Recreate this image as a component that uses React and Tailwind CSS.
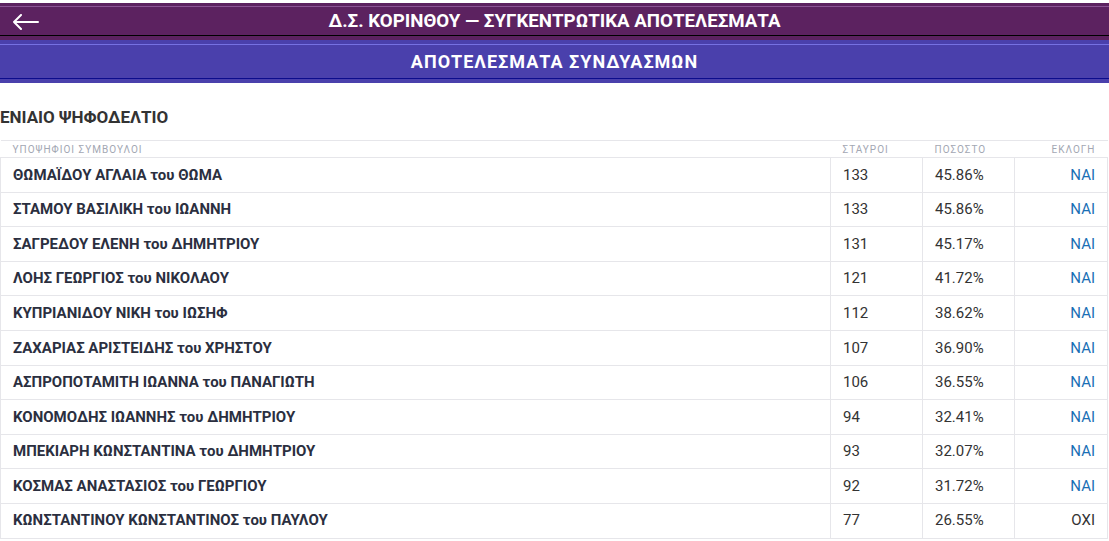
const rows = [
  ['ΘΩΜΑΪΔΟΥ ΑΓΛΑΙΑ του ΘΩΜΑ', '133', '45.86%', 'ΝΑΙ'],
  ['ΣΤΑΜΟΥ ΒΑΣΙΛΙΚΗ του ΙΩΑΝΝΗ', '133', '45.86%', 'ΝΑΙ'],
  ['ΣΑΓΡΕΔΟΥ ΕΛΕΝΗ του ΔΗΜΗΤΡΙΟΥ', '131', '45.17%', 'ΝΑΙ'],
  ['ΛΟΗΣ ΓΕΩΡΓΙΟΣ του ΝΙΚΟΛΑΟΥ', '121', '41.72%', 'ΝΑΙ'],
  ['ΚΥΠΡΙΑΝΙΔΟΥ ΝΙΚΗ του ΙΩΣΗΦ', '112', '38.62%', 'ΝΑΙ'],
  ['ΖΑΧΑΡΙΑΣ ΑΡΙΣΤΕΙΔΗΣ του ΧΡΗΣΤΟΥ', '107', '36.90%', 'ΝΑΙ'],
  ['ΑΣΠΡΟΠΟΤΑΜΙΤΗ ΙΩΑΝΝΑ του ΠΑΝΑΓΙΩΤΗ', '106', '36.55%', 'ΝΑΙ'],
  ['ΚΟΝΟΜΟΔΗΣ ΙΩΑΝΝΗΣ του ΔΗΜΗΤΡΙΟΥ', '94', '32.41%', 'ΝΑΙ'],
  ['ΜΠΕΚΙΑΡΗ ΚΩΝΣΤΑΝΤΙΝΑ του ΔΗΜΗΤΡΙΟΥ', '93', '32.07%', 'ΝΑΙ'],
  ['ΚΟΣΜΑΣ ΑΝΑΣΤΑΣΙΟΣ του ΓΕΩΡΓΙΟΥ', '92', '31.72%', 'ΝΑΙ'],
  ['ΚΩΝΣΤΑΝΤΙΝΟΥ ΚΩΝΣΤΑΝΤΙΝΟΣ του ΠΑΥΛΟΥ', '77', '26.55%', 'ΟΧΙ'],
];

export default function App() {
  return (
    <div className="w-[1109px] h-[541px] overflow-hidden bg-white font-['Roboto','Noto_Sans',sans-serif] text-[#333]">
      <div className="h-[3px] bg-white" />

      {/* top bar */}
      <div className="bg-[#5c2260]">
        <div className="h-[3px]" />
        <div className="h-px bg-[#8a5494]" />
        <div className="relative flex h-[28px] items-center justify-center">
          <svg className="absolute left-[12px] top-[7px]" width="28" height="16" viewBox="0 0 28 16" fill="none" stroke="white" strokeWidth="2" strokeLinecap="round">
            <path d="M2 8h24M2 8l7-7M2 8l7 7" />
          </svg>
          <h1 className="text-[18.7px] font-bold text-white">Δ.Σ. ΚΟΡΙΝΘΟΥ — ΣΥΓΚΕΝΤΡΩΤΙΚΑ ΑΠΟΤΕΛΕΣΜΑΤΑ</h1>
        </div>
        <div className="h-px bg-black" />
        <div className="h-[4px]" />
      </div>

      {/* sub bar */}
      <div className="bg-[#4a40ac]">
        <div className="h-[4px]" />
        <div className="h-px bg-[#7671e2]" />
        <div className="flex h-[33px] items-center justify-center">
          <h2 className="text-[18px] font-bold tracking-[1px] text-white">ΑΠΟΤΕΛΕΣΜΑΤΑ ΣΥΝΔΥΑΣΜΩΝ</h2>
        </div>
        <div className="h-px bg-[#0c0c8c]" />
        <div className="h-[4px]" />
      </div>

      <div className="flex h-[57px] items-center pt-[12px]">
        <h3 className="text-[17px] font-bold text-[#333]">ΕΝΙΑΙΟ ΨΗΦΟΔΕΛΤΙΟ</h3>
      </div>

      <table className="w-[1107px] table-fixed border-collapse">
        <colgroup>
          <col className="w-[830px]" />
          <col className="w-[92px]" />
          <col className="w-[92px]" />
          <col className="w-[93px]" />
        </colgroup>
        <thead>
          <tr className="h-[17px] border-y border-[#e6e6ea] text-[10px] tracking-[1px] text-[#a3a7b3]">
            <th className="px-3 text-left font-normal">ΥΠΟΨΗΦΙΟΙ ΣΥΜΒΟΥΛΟΙ</th>
            <th className="px-3 text-left font-normal">ΣΤΑΥΡΟΙ</th>
            <th className="px-3 text-left font-normal">ΠΟΣΟΣΤΟ</th>
            <th className="px-3 text-right font-normal">ΕΚΛΟΓΗ</th>
          </tr>
        </thead>
        <tbody>
          {rows.map((r) => (
            <tr key={r[0]} className="h-[34.6px] text-[15px]">
              <td className="border border-[#e6e6ea] px-3 font-bold text-[#2b2f3f]">{r[0]}</td>
              <td className="border border-[#e6e6ea] px-3 text-[#333]">{r[1]}</td>
              <td className="border border-[#e6e6ea] px-3 text-[#333]">{r[2]}</td>
              <td className={`border border-[#e6e6ea] px-3 text-right ${r[3] === 'ΝΑΙ' ? 'text-[#1a6fb5]' : 'text-[#333]'}`}>{r[3]}</td>
            </tr>
          ))}
        </tbody>
      </table>
    </div>
  );
}
